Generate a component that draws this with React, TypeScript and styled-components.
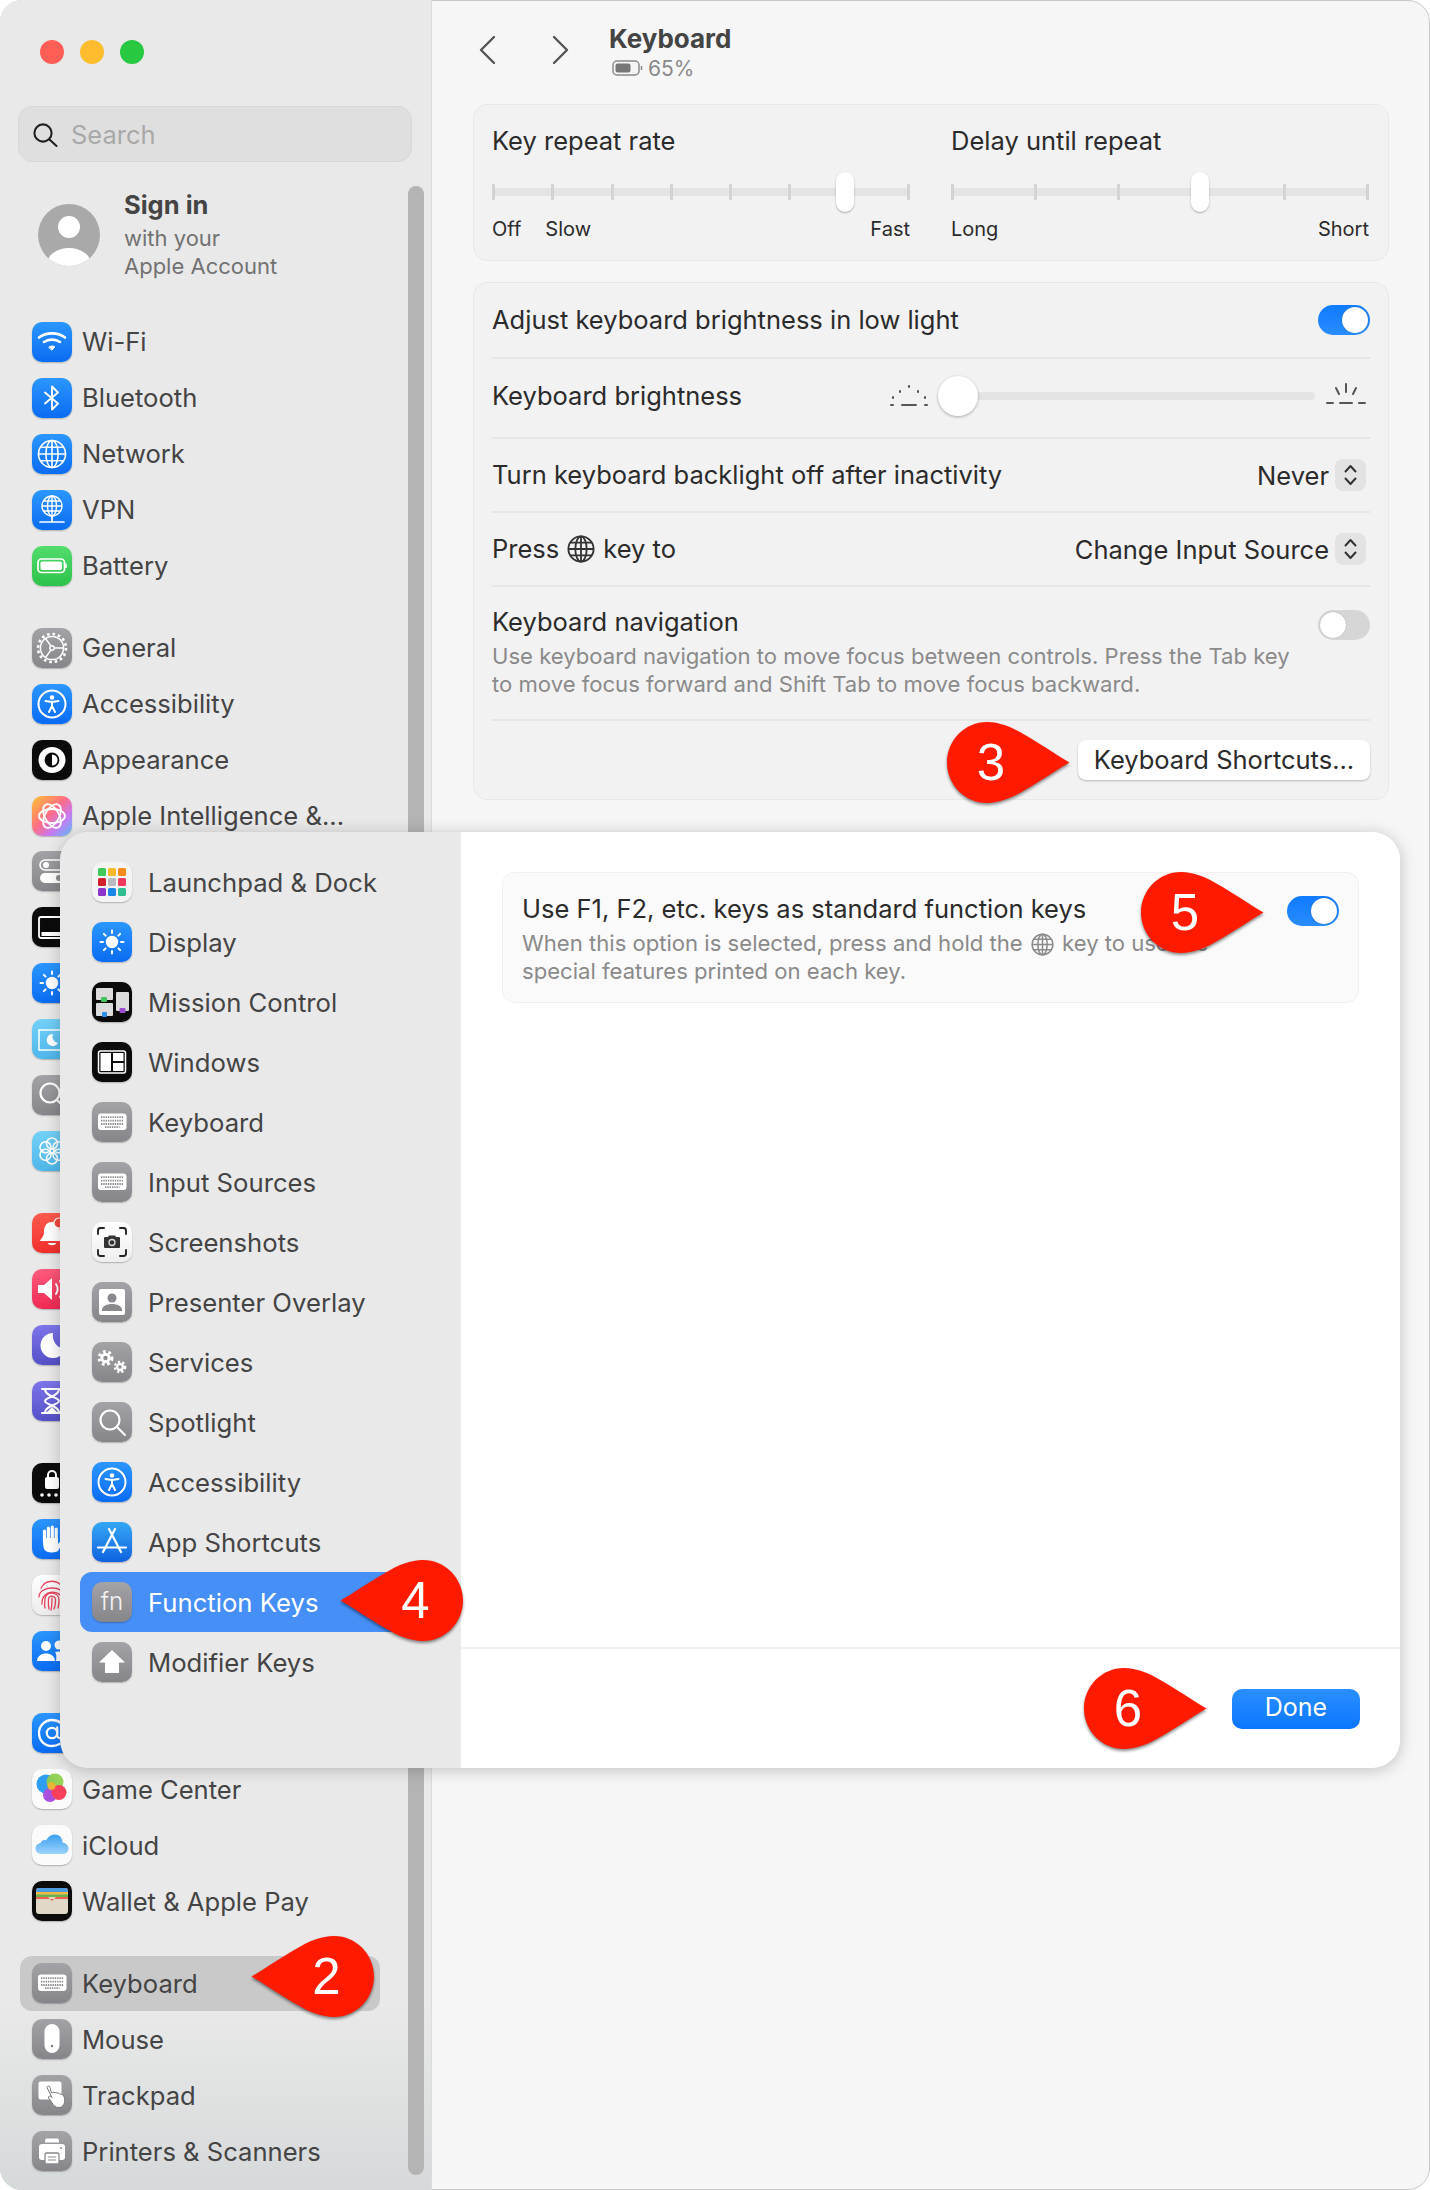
import React from 'react';
import styled, { createGlobalStyle } from 'styled-components';

const GlobalStyle = createGlobalStyle`
    html, body {
        margin: 0;
        padding: 0;
        background: #ffffff;
    }
    * {
        box-sizing: border-box;
    }
`;

const FONT = `Inter, 'Liberation Sans', sans-serif`;

const Page = styled.div`
    position: relative;
    width: 1430px;
    height: 2190px;
    font-family: ${FONT};
`;

const Window = styled.div`
    display: flex;
    width: 100%;
    height: 100%;
    border-radius: 22px;
    overflow: hidden;
    outline: 1px solid #c9c9c9;
    outline-offset: -1px;
`;

const Sidebar = styled.aside`
    position: relative;
    flex: 0 0 432px;
    padding: 40px 0 0;
    background: linear-gradient(#e9e9e9 0, #e9e9e9 2000px, #d6d9da 2190px);
    border-right: 1px solid #dcdcdc;
`;

const Lights = styled.div`
    display: flex;
    gap: 16px;
    padding-left: 40px;
`;

const Light = styled.span<{ $c: string }>`
    width: 24px;
    height: 24px;
    border-radius: 50%;
    background: ${(p) => p.$c};
`;

const SearchBox = styled.div`
    display: flex;
    align-items: center;
    gap: 13px;
    width: 394px;
    height: 56px;
    margin: 42px 0 0 18px;
    padding: 1px 0 0 13px;
    background: #dfdfdf;
    border: 1px solid #d8d8d8;
    border-radius: 14px;
    font-size: 25.5px;
    color: #a9a9a9;
`;

const Account = styled.div`
    display: flex;
    align-items: center;
    gap: 24px;
    height: 90px;
    margin: 28px 0 34px 38px;
`;

const Avatar = styled.svg`
    flex: none;
    width: 62px;
    height: 62px;
`;

const AccountText = styled.div`
    display: flex;
    flex-direction: column;
    font-size: 22px;
    line-height: 28px;
    color: #727272;
`;

const AccountName = styled.div`
    margin-top: -2px;
    margin-bottom: 2px;
    font-size: 25.5px;
    font-weight: 700;
    line-height: 34px;
    color: #444444;
`;

const Group = styled.div`
    margin-bottom: 26.5px;
`;

const NavRow = styled.div<{ $active?: boolean }>`
    display: flex;
    align-items: center;
    gap: 10px;
    width: 360px;
    height: 55.9px;
    margin-left: 20px;
    padding-left: 12px;
    border-radius: 12px;
    background: ${(p) => (p.$active ? '#c9c9c9' : 'transparent')};
    font-size: 25.6px;
    color: #444444;
    white-space: nowrap;
`;

const Tile = styled.span<{ $bg: string }>`
    flex: none;
    display: block;
    width: 40px;
    height: 40px;
    border-radius: 10px;
    background: ${(p) => p.$bg};
    box-shadow: 0 1px 1.5px rgba(0, 0, 0, 0.25);
    overflow: hidden;
    svg {
        display: block;
        width: 40px;
        height: 40px;
    }
`;

const Scrollbar = styled.div`
    position: absolute;
    top: 186px;
    left: 408px;
    width: 16px;
    height: 1989px;
    border-radius: 8px;
    background: #b4b4b4;
`;

const Main = styled.main`
    flex: 1;
    display: flex;
    flex-direction: column;
    padding: 0 41px;
    background: #f6f6f6;
`;

const Header = styled.header`
    display: flex;
    align-items: center;
    height: 104px;
    padding: 0 0 0 6px;
`;

const NavArrows = styled.div`
    display: flex;
    gap: 56px;
    margin: 0 40px 4px 0;
    svg {
        display: block;
        width: 17px;
        height: 30px;
    }
`;

const TitleBlock = styled.div`
    display: flex;
    flex-direction: column;
`;

const Title = styled.div`
    font-size: 26px;
    font-weight: 700;
    line-height: 32px;
    color: #444444;
`;

const BatteryLine = styled.div`
    display: flex;
    align-items: center;
    gap: 5px;
    margin-left: 3px;
    font-size: 21px;
    line-height: 27px;
    color: #8a8a8a;
`;

const Card = styled.section<{ $mb?: number }>`
    margin-bottom: ${(p) => p.$mb ?? 0}px;
    background: #f2f2f2;
    border: 1px solid #e8e8e8;
    border-radius: 14px;
`;

const RepeatCard = styled(Card)`
    display: grid;
    grid-template-columns: 418px 418px;
    column-gap: 41px;
    height: 157px;
    padding: 0 18px;
`;

const SliderCol = styled.div`
    padding-top: 18px;
`;

const CardLabel = styled.div`
    font-size: 25.5px;
    line-height: 36px;
    color: #2b2b2b;
`;

const TickSlider = styled.div`
    position: relative;
    display: flex;
    justify-content: space-between;
    align-items: center;
    height: 40px;
    margin-top: 13px;
    &::before {
        content: '';
        position: absolute;
        left: 0;
        right: 0;
        top: 16px;
        height: 8px;
        background: #e4e4e4;
    }
`;

const Tick = styled.span`
    position: relative;
    width: 3px;
    height: 16px;
    border-radius: 1px;
    background: #d3d3d3;
`;

const TallThumb = styled.span<{ $at: number }>`
    position: absolute;
    top: 0;
    left: ${(p) => p.$at}px;
    width: 18px;
    height: 40px;
    border-radius: 9px;
    background: #ffffff;
    box-shadow: 0 1px 2px rgba(0, 0, 0, 0.3);
`;

const SliderEnds = styled.div`
    display: flex;
    justify-content: space-between;
    margin-top: 5px;
    font-size: 20px;
    line-height: 24px;
    color: #2b2b2b;
`;

const EndGroup = styled.div`
    display: flex;
    gap: 24px;
`;

const Row = styled.div<{ $h: number; $first?: boolean }>`
    display: flex;
    align-items: center;
    justify-content: space-between;
    height: ${(p) => p.$h}px;
    margin: 0 18px;
    border-top: ${(p) => (p.$first ? 'none' : '2px solid #e7e7e7')};
`;

const InlineLabel = styled(CardLabel)`
    display: flex;
    align-items: center;
    gap: 8px;
`;

const Toggle = styled.span<{ $on?: boolean; $mt?: number }>`
    flex: none;
    display: flex;
    justify-content: ${(p) => (p.$on ? 'flex-end' : 'flex-start')};
    width: 52px;
    height: 30px;
    margin-top: ${(p) => p.$mt ?? 0}px;
    padding: 2px;
    border-radius: 15px;
    background: ${(p) => (p.$on ? 'linear-gradient(#0f7bff, #2a8cff)' : '#d6d6d6')};
    &::after {
        content: '';
        width: 26px;
        height: 26px;
        border-radius: 50%;
        background: #ffffff;
        box-shadow: 0 0 1px rgba(0, 0, 0, 0.4);
    }
`;

const BrightnessRow = styled(Row)`
    padding-bottom: 4px;
`;

const BrightnessControl = styled.div`
    display: flex;
    align-items: center;
    margin-right: 3px;
    svg {
        display: block;
        width: 42px;
        height: 30px;
    }
`;

const BrightnessTrack = styled.div`
    position: relative;
    width: 374px;
    height: 8px;
    margin: 0 10px 0 11px;
    border-radius: 4px;
    background: #e4e4e4;
`;

const RoundThumb = styled.span`
    position: absolute;
    top: -16px;
    left: -3px;
    width: 40px;
    height: 40px;
    border-radius: 50%;
    background: #ffffff;
    box-shadow: 0 1px 3px rgba(0, 0, 0, 0.3);
`;

const SelectWrap = styled.div`
    display: flex;
    align-items: center;
    gap: 6px;
    margin-right: 4px;
    font-size: 25.5px;
    color: #2b2b2b;
`;

const Stepper = styled.span`
    width: 31px;
    height: 32px;
    border-radius: 8px;
    background: #e3e3e3;
    svg {
        display: block;
        width: 31px;
        height: 32px;
    }
`;

const NavBlock = styled.div`
    max-width: 830px;
`;

const Hint = styled.div`
    margin-top: 2px;
    font-size: 22.1px;
    line-height: 28px;
    color: #8a8a8a;
    svg {
        width: 23px;
        height: 23px;
        margin: 0 2px;
        vertical-align: -5px;
    }
`;

const TopRow = styled(Row)`
    align-items: flex-start;
    padding-top: 17px;
`;

const ButtonRow = styled(Row)`
    justify-content: flex-end;
`;

const PlainButton = styled.button`
    width: 292px;
    height: 40px;
    padding: 0 0 2px;
    border: none;
    border-radius: 8px;
    background: #ffffff;
    box-shadow: 0 1px 2px rgba(0, 0, 0, 0.25);
    font-family: ${FONT};
    font-size: 25.5px;
    color: #2b2b2b;
`;

const Dialog = styled.div`
    position: absolute;
    top: 832px;
    left: 60px;
    display: flex;
    width: 1340px;
    height: 936px;
    border-radius: 28px;
    overflow: hidden;
    box-shadow: 0 2px 16px rgba(0, 0, 0, 0.22);
`;

const DialogNav = styled.div`
    flex: 0 0 401px;
    padding: 20px 20px 0;
    background: #e9e9e9;
`;

const DialogRow = styled.div<{ $active?: boolean }>`
    display: flex;
    align-items: center;
    gap: 16px;
    height: 60px;
    padding-left: 12px;
    border-radius: 12px;
    background: ${(p) => (p.$active ? '#468ff7' : 'transparent')};
    font-size: 25.7px;
    color: ${(p) => (p.$active ? '#ffffff' : '#444444')};
`;

const DialogBody = styled.div`
    flex: 1;
    display: flex;
    flex-direction: column;
    background: #ffffff;
`;

const DialogContent = styled.div`
    flex: 1;
    padding: 40px 41px 0;
`;

const OptionCard = styled.div`
    display: flex;
    justify-content: space-between;
    height: 131px;
    padding: 18px 19px 0 19px;
    background: #fafafa;
    border: 1px solid #f0f0f0;
    border-radius: 12px;
`;

const DialogFooter = styled.div`
    display: flex;
    justify-content: flex-end;
    align-items: center;
    height: 121px;
    padding: 0 40px 0 0;
    border-top: 2px solid #f2f2f2;
`;

const DoneButton = styled.button`
    width: 128px;
    height: 40px;
    padding: 0 0 3px;
    border: none;
    border-radius: 10px;
    background: linear-gradient(#2b8fff, #0a77ff);
    font-family: ${FONT};
    font-size: 25px;
    color: #ffffff;
`;

const Callout = styled.div<{ $x: number; $y: number; $flip?: boolean }>`
    position: absolute;
    top: ${(p) => p.$y}px;
    left: ${(p) => p.$x}px;
    display: flex;
    align-items: center;
    justify-content: center;
    width: 123px;
    height: 81px;
    padding: ${(p) => (p.$flip ? '0 0 0 28px' : '0 35px 0 0')};
    font-family: 'Liberation Sans', Arial, sans-serif;
    font-size: 51px;
    color: #ffffff;
    svg {
        position: absolute;
        inset: 0;
        width: 123px;
        height: 81px;
        overflow: visible;
        filter: drop-shadow(0 2px 1.5px rgba(0, 0, 0, 0.45));
        transform: ${(p) => (p.$flip ? 'scaleX(-1)' : 'none')};
    }
    span {
        position: relative;
    }
`;

const s = { fill: 'none', stroke: '#fff', strokeLinecap: 'round' as const, strokeLinejoin: 'round' as const };

const GRAY = 'linear-gradient(#a3a3a7, #86868a)';
const BLUE = 'linear-gradient(#2b96ff, #0a6cf2)';
const BLACK = '#0b0b0b';
const PURPLE = 'linear-gradient(#7d74ea, #5450c8)';
const SKY = 'linear-gradient(#73d1f7, #4fb6ea)';

const Globe = ({ x = 20, y = 20, r = 13, c = '#fff', w = 1.6 }) => (
    <g fill="none" stroke={c} strokeWidth={w}>
        <circle cx={x} cy={y} r={r} />
        <ellipse cx={x} cy={y} rx={r * 0.45} ry={r} />
        <path d={`M${x} ${y - r}V${y + r}M${x - r} ${y}H${x + r}`} />
        <path d={`M${x - r * 0.86} ${y - r * 0.5}H${x + r * 0.86}M${x - r * 0.86} ${y + r * 0.5}H${x + r * 0.86}`} />
    </g>
);

const Gear = ({ x, y, r, hole = '#8f8f93' }: { x: number; y: number; r: number; hole?: string }) => (
    <g>
        <circle cx={x} cy={y} r={r} fill="none" stroke="#fff" strokeWidth={r * 0.45} strokeDasharray={`${r * 0.42} ${r * 0.42}`} />
        <circle cx={x} cy={y} r={r * 0.8} fill="#fff" />
        <circle cx={x} cy={y} r={r * 0.35} fill={hole} />
    </g>
);

const KeyboardGlyph = () => (
    <g>
        <rect x="6" y="11.5" width="28.5" height="16.5" rx="3" fill="#fff" />
        <g stroke="#8c8c90" strokeWidth="1.8" strokeDasharray="1.4 .9">
            <path d="M9 15.2H31.5M9 18.6H31.5M9 22H31.5" />
            <path d="M13 25.2H27.5" />
        </g>
    </g>
);

const Person = ({ x = 20, y = 20 }) => (
    <g {...s} strokeWidth="2">
        <circle cx={x} cy={y - 6.5} r="1.3" fill="#fff" />
        <path d={`M${x - 6.5} ${y - 3}L${x} ${y - 2}L${x + 6.5} ${y - 3}M${x} ${y - 2}V${y + 2}L${x - 3} ${y + 8}M${x} ${y + 2}L${x + 3} ${y + 8}`} />
    </g>
);

const Sun = () => (
    <g>
        <circle cx="20" cy="20" r="6.2" fill="#fff" />
        <g {...s} strokeWidth="2">
            {[0, 45, 90, 135, 180, 225, 270, 315].map((a) => (
                <path key={a} d="M20 8.5V11" transform={`rotate(${a} 20 20)`} />
            ))}
        </g>
    </g>
);

const icons: Record<string, { bg: string; glyph: React.ReactNode }> = {
    wifi: {
        bg: BLUE,
        glyph: (
            <g {...s}>
                <path d="M7 15.5C14 10 26 10 33 15.5" strokeWidth="2.6" />
                <path d="M12 20C16.5 16.8 23.5 16.8 28 20" strokeWidth="2.6" />
                <path d="M17 25C18.8 23.7 21.2 23.7 23 25L20 28Z" fill="#fff" strokeWidth="1" />
            </g>
        ),
    },
    bluetooth: { bg: BLUE, glyph: <path {...s} strokeWidth="1.9" d="M13 14.5L26 25.5L20 31.5V8.5L26 14.5L13 25.5" /> },
    network: { bg: BLUE, glyph: <Globe r={13.5} /> },
    vpn: {
        bg: BLUE,
        glyph: (
            <g>
                <Globe y={16} r={10} w={1.4} />
                <path {...s} strokeWidth="1.7" d="M20 26V32M8 32H32" />
            </g>
        ),
    },
    battery: {
        bg: 'linear-gradient(#52dc6d, #2cc24a)',
        glyph: (
            <g>
                <rect x="6" y="13" width="26.5" height="13.5" rx="3.5" fill="none" stroke="#fff" strokeWidth="1.7" />
                <rect x="8.5" y="15.5" width="21.5" height="8.5" rx="1.8" fill="#fff" />
                <path d="M34 17.5V22" stroke="#fff" strokeWidth="1.6" />
            </g>
        ),
    },
    general: {
        bg: GRAY,
        glyph: (
            <g fill="none" stroke="#fff">
                <circle cx="20" cy="20" r="14" strokeWidth="2.6" strokeDasharray="2.6 2.9" />
                <circle cx="20" cy="20" r="11.6" strokeWidth="1.5" />
                <circle cx="20" cy="20" r="2.2" strokeWidth="1.4" />
                <path strokeWidth="1.4" d="M22 20H31.5M19 18L13.5 10.5M19 22L13.5 29.5" />
            </g>
        ),
    },
    accessibility: {
        bg: BLUE,
        glyph: (
            <g>
                <circle {...s} cx="20" cy="20" r="13.5" strokeWidth="2" />
                <Person />
            </g>
        ),
    },
    appearance: {
        bg: BLACK,
        glyph: (
            <g>
                <ellipse cx="20" cy="20" rx="13.5" ry="13" fill="#fff" />
                <path d="M20 13.5A6.5 6.5 0 0 0 20 26.5Z" fill="#0b0b0b" />
                <circle cx="20" cy="20" r="6.5" fill="none" stroke="#0b0b0b" strokeWidth="1.8" />
            </g>
        ),
    },
    intelligence: {
        bg: 'linear-gradient(135deg, #ffb040 10%, #ff6d86 45%, #c779f2 70%, #5ac2fb 100%)',
        glyph: (
            <g fill="none" stroke="#fff" strokeWidth="1.8">
                <ellipse cx="20" cy="20" rx="13" ry="7" />
                <ellipse cx="20" cy="20" rx="13" ry="7" transform="rotate(60 20 20)" />
                <ellipse cx="20" cy="20" rx="13" ry="7" transform="rotate(120 20 20)" />
            </g>
        ),
    },
    control: {
        bg: GRAY,
        glyph: (
            <g>
                <rect x="8" y="9" width="24" height="10" rx="5" fill="none" stroke="#fff" strokeWidth="1.6" />
                <circle cx="14" cy="14" r="3" fill="#fff" />
                <rect x="8" y="22" width="26" height="10" rx="5" fill="#fff" />
                <circle cx="27" cy="27" r="3" fill="#8f8f93" />
            </g>
        ),
    },
    dock: {
        bg: BLACK,
        glyph: (
            <g>
                <rect x="7" y="10" width="28" height="21" rx="2" fill="none" stroke="#fff" strokeWidth="1.8" />
                <rect x="9.5" y="25" width="24" height="4" fill="#fff" />
            </g>
        ),
    },
    displays: { bg: BLUE, glyph: <Sun /> },
    saver: {
        bg: SKY,
        glyph: (
            <g>
                <rect x="7" y="11" width="28" height="20" fill="none" stroke="#fff" strokeWidth="1.5" />
                <path d="M21 15A6 6 0 1 0 26 24A6.5 6.5 0 0 1 21 15Z" fill="#fff" />
            </g>
        ),
    },
    search: {
        bg: GRAY,
        glyph: (
            <g {...s} strokeWidth="2.2">
                <circle cx="18" cy="18" r="9.5" />
                <path d="M25 25L33 33" />
            </g>
        ),
    },
    wallpaper: {
        bg: SKY,
        glyph: (
            <g fill="none" stroke="#fff" strokeWidth="1.5">
                {[0, 60, 120, 180, 240, 300].map((a) => (
                    <circle key={a} cx="20" cy="12.5" r="5.5" transform={`rotate(${a} 20 20)`} />
                ))}
                <circle cx="20" cy="20" r="2" />
            </g>
        ),
    },
    bell: {
        bg: 'linear-gradient(#ff5a4f, #f12f2b)',
        glyph: (
            <g fill="#fff">
                <path d="M20 9C14 9 12 14 12 19C12 24 9 25 8 28H32C31 25 28 24 28 19C28 14 26 9 20 9Z" />
                <path d="M16 30H24C24 33 16 33 16 30Z" />
                <circle cx="27" cy="10" r="5" fill="#f2473e" stroke="#fff" strokeWidth="1.2" />
            </g>
        ),
    },
    sound: {
        bg: 'linear-gradient(#ff5a7c, #f02a55)',
        glyph: (
            <g>
                <path d="M6 16H12L20 9V31L12 24H6Z" fill="#fff" />
                <path {...s} strokeWidth="2" d="M24 15C26 18 26 22 24 25M28 12C31 17 31 23 28 28" />
            </g>
        ),
    },
    focus: { bg: PURPLE, glyph: <path d="M21 8A12.5 12.5 0 1 0 33 24A13.5 13.5 0 0 1 21 8Z" fill="#fff" /> },
    screentime: {
        bg: PURPLE,
        glyph: (
            <g>
                <path {...s} strokeWidth="2" d="M10 8H30M10 32H30M13 8C13 16 27 16 27 20C27 24 13 24 13 32M27 8C27 16 13 16 13 20C13 24 27 24 27 32" />
                <path d="M15 31L20 26L25 31Z" fill="#fff" />
            </g>
        ),
    },
    lock: {
        bg: BLACK,
        glyph: (
            <g fill="#fff">
                <rect x="13" y="14" width="14" height="12" rx="2" />
                <path {...s} strokeWidth="2" d="M16 14V12C16 6.5 24 6.5 24 12V14" />
                <circle cx="10" cy="32" r="1.8" />
                <circle cx="17" cy="32" r="1.8" />
                <circle cx="24" cy="32" r="1.8" />
                <circle cx="31" cy="32" r="1.8" />
            </g>
        ),
    },
    privacy: {
        bg: BLUE,
        glyph: (
            <g>
                <g stroke="#fff" strokeWidth="3.2" strokeLinecap="round">
                    <path d="M12.5 12V22M16.4 9V22M20.3 8V22M24.2 10V22" />
                </g>
                <path d="M11 19H26V25L30 20.5L32 22L26 32C24 34 14 34.5 12 30C11 27 11 23 11 19Z" fill="#fff" />
            </g>
        ),
    },
    touchid: {
        bg: 'linear-gradient(#ffffff, #ececec)',
        glyph: (
            <g fill="none" stroke="#e8435f" strokeWidth="1.3" strokeLinecap="round">
                <path d="M9 13C14 4 26 4 31 13" />
                <path d="M7 22C7 10 33 10 33 22V26" />
                <path d="M10 29C9 14 30 14 30 25V30" />
                <path d="M13 33C12 30 13 27 13 24C13 16 27 16 27 25C27 28 27 30 26 33" />
                <path d="M17 34C16 30 16.5 27 16.5 24C16.5 20 23.5 20 23.5 25C23.5 29 23.5 31 22 34" />
                <path d="M20 23C20 27 20 31 19 35" />
            </g>
        ),
    },
    users: {
        bg: BLUE,
        glyph: (
            <g fill="#fff">
                <circle cx="14" cy="15" r="5" />
                <path d="M5 30C5 20 23 20 23 30Z" />
                <circle cx="27" cy="14" r="4.5" />
                <path d="M24 30C25 25 24 22 23 21C28 19 35 22 35 30Z" />
            </g>
        ),
    },
    internet: {
        bg: BLUE,
        glyph: (
            <g {...s} strokeWidth="2.3">
                <circle cx="20" cy="20" r="5.2" />
                <path d="M25.2 14.5V22C25.2 27 33 26 33 19C33 11 26.5 7 20 7C12.5 7 7 13 7 20C7 27.5 12.5 33 20 33C23 33 25.5 32.2 27.5 31" />
            </g>
        ),
    },
    game: {
        bg: '#fbfbfb',
        glyph: (
            <g>
                <circle cx="14" cy="15" r="9.5" fill="#2f9df5" />
                <circle cx="23" cy="13" r="8.5" fill="#8fd14f" opacity="0.95" />
                <circle cx="18" cy="26" r="7" fill="#a84fe0" />
                <circle cx="27" cy="23.5" r="7.5" fill="#f9405b" />
                <circle cx="19.5" cy="17" r="4" fill="#f8b32f" opacity="0.85" />
            </g>
        ),
    },
    icloud: {
        bg: '#fbfbfb',
        glyph: (
            <>
                <defs>
                    <linearGradient id="cloud" x1="0" y1="0" x2="0" y2="1">
                        <stop offset="0" stopColor="#3d9ff0" />
                        <stop offset="1" stopColor="#9ad4fa" />
                    </linearGradient>
                </defs>
                <path
                    d="M10 29C6 29 3.5 26.5 3.5 23.5C3.5 20.5 5.5 18.5 8.5 18C9.5 15.5 12 14.5 14 15.5C16 11.5 19 9.5 22.5 9.5C27.5 9.5 30.5 13 30.5 17.5C34 18 36.5 20.5 36.5 23.5C36.5 26.5 34 29 31 29Z"
                    fill="url(#cloud)"
                />
            </>
        ),
    },
    wallet: {
        bg: BLACK,
        glyph: (
            <g>
                <rect x="4" y="7" width="32" height="26" rx="3" fill="#e0d9c8" />
                <path d="M4 10C4 8 5 7 7 7H33C35 7 36 8 36 10V11H4Z" fill="#4a9be0" />
                <rect x="4" y="11" width="32" height="2.5" fill="#f2b83a" />
                <rect x="4" y="13.5" width="32" height="2.5" fill="#6cb24a" />
                <path d="M4 16H16L20 20L24 16H36V18H4Z" fill="#e9614d" />
            </g>
        ),
    },
    keyboard: { bg: GRAY, glyph: <KeyboardGlyph /> },
    mouse: {
        bg: GRAY,
        glyph: (
            <g>
                <rect x="12.5" y="5" width="15" height="29" rx="7.5" fill="#fff" />
                <circle cx="20" cy="27" r="1.2" fill="#77777a" />
            </g>
        ),
    },
    trackpad: {
        bg: GRAY,
        glyph: (
            <g>
                <rect x="6.5" y="6.5" width="23" height="18" rx="2" fill="#fff" />
                <path
                    d="M15 12.5C15 10.5 18 10.5 18 12.5L19.5 18C21 17 23 17 24 18C25 17.5 27 18 27.5 19C29 18.5 32 20 32.5 23C33.5 28 31 32.5 27 32.5C23 32.5 21.5 30.5 19.5 27L16.5 23C16 21 18 20.5 19 21.5L20 22.5Z"
                    fill="#fff"
                    stroke="#77777a"
                    strokeWidth="1"
                />
            </g>
        ),
    },
    printer: {
        bg: GRAY,
        glyph: (
            <g>
                <path d="M13 10C13 8 14 7.5 15 7.5H25C26 7.5 27 8 27 10V11.5H13Z" fill="#fff" />
                <path d="M10 13H30C32 13 33 14 33 16V26C33 28 32 29 30 29H10C8 29 7 28 7 26V16C7 14 8 13 10 13Z" fill="#fff" />
                <rect x="13" y="22" width="14" height="11" rx="1.5" fill="#fff" stroke="#8a8a8e" strokeWidth="1.3" />
                <path d="M16 26H24M16 29H24" stroke="#8a8a8e" strokeWidth="1.2" />
                <circle cx="29" cy="17" r="1" fill="#8a8a8e" />
            </g>
        ),
    },
    launchpad: {
        bg: '#f4f4f4',
        glyph: (
            <g>
                {['#3ec95a', '#f6b92c', '#f58a1f', '#d0202c', '#b9bcbf', '#f0395e', '#8c35c9', '#1b86e8', '#2fbf93'].map((c, i) => (
                    <rect key={c} x={6 + (i % 3) * 10} y={6 + Math.floor(i / 3) * 10} width="8" height="8" rx="1.5" fill={c} />
                ))}
            </g>
        ),
    },
    mission: {
        bg: BLACK,
        glyph: (
            <g>
                <rect x="4" y="6" width="17" height="12" rx="1" fill="#dcdcdc" />
                <rect x="4" y="21" width="17" height="13" rx="1" fill="#dcdcdc" />
                <rect x="24" y="10" width="13" height="19" rx="1" fill="#dcdcdc" />
                <rect x="9" y="15" width="6" height="5" rx="1" fill="#46c25a" />
                <rect x="10" y="30" width="5" height="5" rx="1" fill="#2d8fe8" />
                <rect x="27.5" y="26" width="6" height="5" rx="1" fill="#9a4fd0" />
            </g>
        ),
    },
    windows: {
        bg: BLACK,
        glyph: (
            <g>
                <rect x="6.5" y="9" width="27" height="22" rx="2" fill="none" stroke="#fff" strokeWidth="1.5" />
                <rect x="8.5" y="11" width="10.5" height="18" fill="#fff" />
                <rect x="21" y="11" width="10.5" height="8" fill="#fff" />
                <rect x="21" y="21" width="10.5" height="8" fill="#fff" />
            </g>
        ),
    },
    screenshots: {
        bg: 'linear-gradient(#ffffff, #eeeeee)',
        glyph: (
            <g>
                <path fill="none" stroke="#222" strokeWidth="1.9" strokeLinecap="round" d="M6 12V8.5C6 7 7 6 8.5 6H12M28 6H31.5C33 6 34 7 34 8.5V12M34 28V31.5C34 33 33 34 31.5 34H28M12 34H8.5C7 34 6 33 6 31.5V28" />
                <path d="M13 15H16L17 13.5H23L24 15H27C28 15 28 16 28 16V25C28 26 27 26 27 26H13C12 26 12 25 12 25V16C12 15 13 15 13 15Z" fill="#333" />
                <circle cx="20" cy="20.5" r="3" fill="none" stroke="#ddd" strokeWidth="1.3" />
            </g>
        ),
    },
    presenter: {
        bg: GRAY,
        glyph: (
            <g>
                <rect x="7" y="7" width="26" height="26" rx="2" fill="#fff" />
                <circle cx="20" cy="16" r="4.5" fill="#8a8a8e" />
                <path d="M10 28C10 20 30 20 30 28V29H10Z" fill="#8a8a8e" />
            </g>
        ),
    },
    services: {
        bg: GRAY,
        glyph: (
            <g>
                <Gear x={13.5} y={16} r={6.5} />
                <Gear x={28} y={25} r={5.2} />
            </g>
        ),
    },
    appstore: {
        bg: 'linear-gradient(#35a8f5, #0f62e0)',
        glyph: (
            <g {...s} strokeWidth="2.2">
                <path d="M17 7L29 30M23 7L11 30" />
                <path d="M6 25.5H34" />
            </g>
        ),
    },
    fn: {
        bg: GRAY,
        glyph: (
            <text x="20" y="28" textAnchor="middle" fontFamily="Inter, sans-serif" fontSize="24" fontWeight="300" fill="#f4f4f4">
                fn
            </text>
        ),
    },
    modifier: { bg: GRAY, glyph: <path d="M20 8L33 20.5H27V31H13V20.5H7Z" fill="#fff" /> },
};

const Icon = ({ name }: { name: string }) => (
    <Tile $bg={icons[name].bg}>
        <svg viewBox="0 0 40 40">{icons[name].glyph}</svg>
    </Tile>
);

type NavItem = { icon: string; label?: string; active?: boolean };

const navGroups: NavItem[][] = [
    [
        { icon: 'wifi', label: 'Wi-Fi' },
        { icon: 'bluetooth', label: 'Bluetooth' },
        { icon: 'network', label: 'Network' },
        { icon: 'vpn', label: 'VPN' },
        { icon: 'battery', label: 'Battery' },
    ],
    [
        { icon: 'general', label: 'General' },
        { icon: 'accessibility', label: 'Accessibility' },
        { icon: 'appearance', label: 'Appearance' },
        { icon: 'intelligence', label: 'Apple Intelligence &...' },
        { icon: 'control' },
        { icon: 'dock' },
        { icon: 'displays' },
        { icon: 'saver' },
        { icon: 'search' },
        { icon: 'wallpaper' },
    ],
    [{ icon: 'bell' }, { icon: 'sound' }, { icon: 'focus' }, { icon: 'screentime' }],
    [{ icon: 'lock' }, { icon: 'privacy' }, { icon: 'touchid' }, { icon: 'users' }],
    [
        { icon: 'internet' },
        { icon: 'game', label: 'Game Center' },
        { icon: 'icloud', label: 'iCloud' },
        { icon: 'wallet', label: 'Wallet & Apple Pay' },
    ],
    [
        { icon: 'keyboard', label: 'Keyboard', active: true },
        { icon: 'mouse', label: 'Mouse' },
        { icon: 'trackpad', label: 'Trackpad' },
        { icon: 'printer', label: 'Printers & Scanners' },
    ],
];

const dialogItems: NavItem[] = [
    { icon: 'launchpad', label: 'Launchpad & Dock' },
    { icon: 'displays', label: 'Display' },
    { icon: 'mission', label: 'Mission Control' },
    { icon: 'windows', label: 'Windows' },
    { icon: 'keyboard', label: 'Keyboard' },
    { icon: 'keyboard', label: 'Input Sources' },
    { icon: 'screenshots', label: 'Screenshots' },
    { icon: 'presenter', label: 'Presenter Overlay' },
    { icon: 'services', label: 'Services' },
    { icon: 'search', label: 'Spotlight' },
    { icon: 'accessibility', label: 'Accessibility' },
    { icon: 'appstore', label: 'App Shortcuts' },
    { icon: 'fn', label: 'Function Keys', active: true },
    { icon: 'modifier', label: 'Modifier Keys' },
];

const callouts = [
    { n: 2, x: 251, y: 1936, flip: true },
    { n: 3, x: 947, y: 722 },
    { n: 4, x: 340, y: 1560, flip: true },
    { n: 5, x: 1141, y: 872 },
    { n: 6, x: 1084, y: 1668 },
];

const Ticks = ({ count }: { count: number }) => (
    <>
        {Array.from({ length: count }).map((_, i) => (
            <Tick key={i} />
        ))}
    </>
);

const StepperIcon = () => (
    <Stepper>
        <svg viewBox="0 0 31 32" fill="none" stroke="#333" strokeWidth="2" strokeLinecap="round" strokeLinejoin="round">
            <path d="M10.5 12.5L15.5 7L20.5 12.5M10.5 19.5L15.5 25L20.5 19.5" />
        </svg>
    </Stepper>
);

const GlobeIcon = ({ c = '#333' }: { c?: string }) => (
    <svg viewBox="0 0 40 40" width="28" height="28">
        <Globe r={18} c={c} w={2.6} />
    </svg>
);

const App = () => {
    return (
        <Page>
            <GlobalStyle />
            <Window>
                <Sidebar>
                    <Lights>
                        <Light $c="#ff5f57" />
                        <Light $c="#febc2e" />
                        <Light $c="#28c840" />
                    </Lights>
                    <SearchBox>
                        <svg width="26" height="26" viewBox="0 0 26 26" fill="none" stroke="#222" strokeWidth="2.1" strokeLinecap="round">
                            <circle cx="11" cy="11" r="8.6" />
                            <path d="M17.5 17.5L24.5 24" />
                        </svg>
                        Search
                    </SearchBox>
                    <Account>
                        <Avatar viewBox="0 0 62 62">
                            <defs>
                                <clipPath id="avatar">
                                    <circle cx="31" cy="31" r="31" />
                                </clipPath>
                            </defs>
                            <circle cx="31" cy="31" r="31" fill="#a9a9a9" />
                            <g clipPath="url(#avatar)" fill="#fff">
                                <circle cx="31" cy="23" r="11" />
                                <ellipse cx="31" cy="60" rx="22" ry="16" />
                            </g>
                        </Avatar>
                        <AccountText>
                            <AccountName>Sign in</AccountName>
                            <div>with your</div>
                            <div>Apple Account</div>
                        </AccountText>
                    </Account>
                    {navGroups.map((group, g) => (
                        <Group key={g}>
                            {group.map((item) => (
                                <NavRow key={item.icon} $active={item.active}>
                                    <Icon name={item.icon} />
                                    {item.label}
                                </NavRow>
                            ))}
                        </Group>
                    ))}
                    <Scrollbar />
                </Sidebar>
                <Main>
                    <Header>
                        <NavArrows>
                            <svg viewBox="0 0 17 30" fill="none" stroke="#555" strokeWidth="2.4" strokeLinecap="round" strokeLinejoin="round">
                                <path d="M15 2L2 15L15 28" />
                            </svg>
                            <svg viewBox="0 0 17 30" fill="none" stroke="#555" strokeWidth="2.4" strokeLinecap="round" strokeLinejoin="round">
                                <path d="M2 2L15 15L2 28" />
                            </svg>
                        </NavArrows>
                        <TitleBlock>
                            <Title>Keyboard</Title>
                            <BatteryLine>
                                <svg width="31" height="16" viewBox="0 0 31 16" fill="none">
                                    <rect x="1" y="1" width="26" height="14" rx="4" stroke="#8a8a8a" strokeWidth="1.5" />
                                    <rect x="3.5" y="3.5" width="15" height="9" rx="2" fill="#777" />
                                    <path d="M29.5 6V10" stroke="#8a8a8a" strokeWidth="1.5" />
                                </svg>
                                65%
                            </BatteryLine>
                        </TitleBlock>
                    </Header>
                    <RepeatCard $mb={21}>
                        <SliderCol>
                            <CardLabel>Key repeat rate</CardLabel>
                            <TickSlider>
                                <Ticks count={8} />
                                <TallThumb $at={344} />
                            </TickSlider>
                            <SliderEnds>
                                <EndGroup>
                                    <span>Off</span>
                                    <span>Slow</span>
                                </EndGroup>
                                <span>Fast</span>
                            </SliderEnds>
                        </SliderCol>
                        <SliderCol>
                            <CardLabel>Delay until repeat</CardLabel>
                            <TickSlider>
                                <Ticks count={6} />
                                <TallThumb $at={240} />
                            </TickSlider>
                            <SliderEnds>
                                <span>Long</span>
                                <span>Short</span>
                            </SliderEnds>
                        </SliderCol>
                    </RepeatCard>
                    <Card>
                        <Row $h={74} $first>
                            <CardLabel>Adjust keyboard brightness in low light</CardLabel>
                            <Toggle $on />
                        </Row>
                        <BrightnessRow $h={80}>
                            <CardLabel>Keyboard brightness</CardLabel>
                            <BrightnessControl>
                                <svg viewBox="0 0 42 30" fill="none" stroke="#555" strokeWidth="2" strokeLinecap="round">
                                    <path d="M21 5V6M12 10V11M30 10V11M5 16V17M37 16V17" />
                                    <path d="M3 24H5M14 24H28M37 24H39" />
                                </svg>
                                <BrightnessTrack>
                                    <RoundThumb />
                                </BrightnessTrack>
                                <svg viewBox="0 0 42 30" fill="none" stroke="#555" strokeWidth="2" strokeLinecap="round">
                                    <path d="M21 3V11M11 7L14 13M31 7L28 13" />
                                    <path d="M2 22H8M15 22H27M34 22H40" />
                                </svg>
                            </BrightnessControl>
                        </BrightnessRow>
                        <Row $h={74}>
                            <CardLabel>Turn keyboard backlight off after inactivity</CardLabel>
                            <SelectWrap>
                                Never
                                <StepperIcon />
                            </SelectWrap>
                        </Row>
                        <Row $h={74}>
                            <InlineLabel>
                                Press <GlobeIcon /> key to
                            </InlineLabel>
                            <SelectWrap>
                                Change Input Source
                                <StepperIcon />
                            </SelectWrap>
                        </Row>
                        <TopRow $h={134}>
                            <NavBlock>
                                <CardLabel>Keyboard navigation</CardLabel>
                                <Hint>
                                    Use keyboard navigation to move focus between controls. Press the Tab key
                                    <br />
                                    to move focus forward and Shift Tab to move focus backward.
                                </Hint>
                            </NavBlock>
                            <Toggle $mt={6} />
                        </TopRow>
                        <ButtonRow $h={80}>
                            <PlainButton>Keyboard Shortcuts...</PlainButton>
                        </ButtonRow>
                    </Card>
                </Main>
            </Window>
            <Dialog>
                <DialogNav>
                    {dialogItems.map((item) => (
                        <DialogRow key={item.label} $active={item.active}>
                            <Icon name={item.icon} />
                            {item.label}
                        </DialogRow>
                    ))}
                </DialogNav>
                <DialogBody>
                    <DialogContent>
                        <OptionCard>
                            <div>
                                <CardLabel>Use F1, F2, etc. keys as standard function keys</CardLabel>
                                <Hint>
                                    When this option is selected, press and hold the <GlobeIcon c="#8a8a8a" /> key to use the
                                    <br />
                                    special features printed on each key.
                                </Hint>
                            </div>
                            <Toggle $on $mt={5} />
                        </OptionCard>
                    </DialogContent>
                    <DialogFooter>
                        <DoneButton>Done</DoneButton>
                    </DialogFooter>
                </DialogBody>
            </Dialog>
            {callouts.map((c) => (
                <Callout key={c.n} $x={c.x} $y={c.y} $flip={c.flip}>
                    <svg viewBox="0 0 123 81">
                        <path
                            d="M122.5 40.5C105 30 92 21 78 13C65 5 52 0 40 0C18 0 0 18 0 40.5C0 63 18 81 40 81C52 81 65 76 78 68C92 60 105 51 122.5 40.5Z"
                            fill="#ff1a00"
                        />
                    </svg>
                    <span>{c.n}</span>
                </Callout>
            ))}
        </Page>
    );
};

export default App;
